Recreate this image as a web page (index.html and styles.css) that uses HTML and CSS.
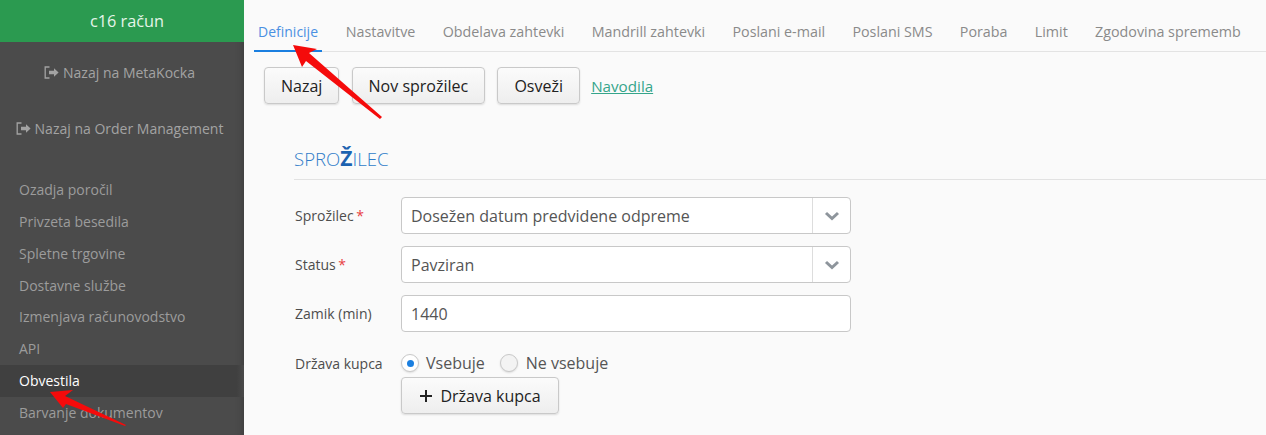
FILE: index.html
```html
<!DOCTYPE html>
<html lang="sl">
<head>
<meta charset="utf-8">
<title>Obvestila</title>
<link rel="stylesheet" href="styles.css">
</head>
<body>
<div class="app">
  <aside class="sidebar">
    <div class="brand">c16 račun</div>
    <a class="back back-first"><svg class="exit" viewBox="0 0 15 13"><path d="M5.5 1H1.2v11h4.3" fill="none" stroke="currentColor" stroke-width="1.3"/><path d="M5 4.7h5V2.2L14.6 6.5 10 10.8V8.3H5z" fill="currentColor"/></svg>Nazaj na MetaKocka</a>
    <a class="back back-second"><svg class="exit" viewBox="0 0 15 13"><path d="M5.5 1H1.2v11h4.3" fill="none" stroke="currentColor" stroke-width="1.3"/><path d="M5 4.7h5V2.2L14.6 6.5 10 10.8V8.3H5z" fill="currentColor"/></svg>Nazaj na Order Management</a>
    <nav class="menu">
      <a class="menu-item">Ozadja poročil</a>
      <a class="menu-item">Privzeta besedila</a>
      <a class="menu-item">Spletne trgovine</a>
      <a class="menu-item">Dostavne službe</a>
      <a class="menu-item">Izmenjava računovodstvo</a>
      <a class="menu-item">API</a>
      <a class="menu-item active">Obvestila</a>
      <a class="menu-item">Barvanje dokumentov</a>
    </nav>
  </aside>
  <main class="content">
    <div class="tabs">
      <a class="tab active">Definicije</a>
      <a class="tab">Nastavitve</a>
      <a class="tab">Obdelava zahtevki</a>
      <a class="tab">Mandrill zahtevki</a>
      <a class="tab">Poslani e-mail</a>
      <a class="tab">Poslani SMS</a>
      <a class="tab">Poraba</a>
      <a class="tab">Limit</a>
      <a class="tab">Zgodovina sprememb</a>
    </div>
    <div class="toolbar">
      <button class="btn">Nazaj</button>
      <button class="btn">Nov sprožilec</button>
      <button class="btn">Osveži</button>
      <a class="help">Navodila</a>
    </div>
    <section class="panel">
      <h2 class="heading">SPRO<b>Ž</b>ILEC</h2>
      <div class="row">
        <label class="label">Sprožilec <i>*</i></label>
        <div class="select"><span class="value">Dosežen datum predvidene odpreme</span><span class="caret"><svg viewBox="0 0 16 10"><path d="M2 2l6 5.5L14 2" fill="none" stroke="currentColor" stroke-width="3"/></svg></span></div>
      </div>
      <div class="row">
        <label class="label">Status <i>*</i></label>
        <div class="select"><span class="value">Pavziran</span><span class="caret"><svg viewBox="0 0 16 10"><path d="M2 2l6 5.5L14 2" fill="none" stroke="currentColor" stroke-width="3"/></svg></span></div>
      </div>
      <div class="row">
        <label class="label">Zamik (min)</label>
        <div class="select"><span class="value">1440</span></div>
      </div>
      <div class="row row-radio">
        <label class="label">Država kupca</label>
        <div class="radios">
          <span class="radio on"></span><span class="radio-text">Vsebuje</span>
          <span class="radio"></span><span class="radio-text">Ne vsebuje</span>
        </div>
      </div>
      <div class="row row-add">
        <button class="btn btn-add"><svg class="plus" viewBox="0 0 12 12"><path d="M6 0v12M0 6h12" stroke="currentColor" stroke-width="2"/></svg>Država kupca</button>
      </div>
    </section>
  </main>
</div>
<svg class="arrows" viewBox="0 0 1266 435">
  <path d="M293 45L317 49 309 53 382 117 380 119 306 61 302 67z" fill="#f50b0b"/>
  <path d="M50 392L73 390 65 396 126 425 125 426 66 404 63 408z" fill="#f50b0b"/>
</svg>
</body>
</html>
```
FILE: styles.css
```css
* { box-sizing: border-box; }
html, body { margin: 0; height: 435px; overflow: hidden; }
body { font-family: "Open Sans", "Noto Sans", sans-serif; background: #fafafa; position: relative; }
.app { display: flex; height: 435px; }
.sidebar { width: 244px; flex: none; background: #4b4b4b; display: flex; flex-direction: column; box-shadow: inset -8px 0 8px -8px rgba(0,0,0,.25); }
.brand { height: 42px; background: #2b9a50; color: #e6f5ea; font-size: 16.3px; line-height: 43px; text-align: center; padding-left: 10px; }
.back { display: flex; justify-content: center; align-items: center; color: #a3a3a3; font-size: 14px; height: 20px; padding-right: 5px; }
.back-first { margin-top: 20px; }
.back-second { margin-top: 36px; }
.exit { width: 15px; height: 13px; margin-right: 4px; }
.menu { margin-top: 36.3px; display: flex; flex-direction: column; }
.menu-item { height: 31.75px; line-height: 31.75px; padding-left: 19px; color: #9c9c9c; font-size: 14px; }
.menu-item.active { background: linear-gradient(to right, #404040 97%, #4a4a4a); color: #fff; }
.content { flex: 1; min-width: 0; padding: 0 0 0 10px; }
.tabs { display: flex; gap: 27.25px; height: 52px; padding-top: 22px; border-bottom: 1px solid #e3e3e3; }
.tab { color: #8a8a8a; font-size: 14.3px; line-height: 20px; height: 30px; white-space: nowrap; }
.tab.active { color: #4a90e2; font-size: 14px; border-bottom: 2px solid #1a7fe0; padding: 0 4px; margin-right: -3.5px; }
.toolbar { display: flex; align-items: center; gap: 12.2px; margin: 15px 0 0 10px; }
.btn { height: 37px; padding: 0 16px; background: linear-gradient(#fbfbfb, #eeeeee); border: 1px solid #c9c9c9; border-radius: 4px; color: #222; font: 16px "Open Sans", "Noto Sans", sans-serif; box-shadow: 0 1px 2px rgba(0,0,0,.12); }
.help { color: #35a58a; text-decoration: underline; font-size: 15.2px; margin-left: -1px; }
.panel { margin: 40px 0 0 40px; }
.heading { margin: 0 0 17px; height: 36px; border-bottom: 1px solid #e2e2e2; font-size: 18.6px; line-height: 28px; font-weight: 300; color: #2f7cc9; }
.heading b { color: #1c62b0; font-size: 21px; font-weight: 700; }
.row { display: flex; align-items: center; margin-bottom: 12px; }
.label { width: 107px; flex: none; font-size: 14px; color: #4d4d4d; padding-left: 1px; }
.label i { color: #e8403f; font-style: normal; margin-left: -1px; }
.select { width: 450px; height: 37px; background: #fff; border: 1px solid #c8c8c8; border-radius: 4px; display: flex; align-items: center; justify-content: space-between; font-size: 16px; color: #555; }
.value { padding-left: 9px; }
.caret { width: 38px; height: 35px; border-left: 1px solid #ddd; display: flex; align-items: center; justify-content: center; color: #8e959c; }
.caret svg { width: 16px; height: 10px; }
.row-radio { margin-bottom: 0; height: 28px; margin-top: 17px; }
.radios { display: flex; align-items: center; font-size: 16px; color: #555; }
.radio { width: 18px; height: 18px; border-radius: 50%; border: 1px solid #c9c9c9; background: #f3f3f3; box-shadow: 0 1px 2px rgba(0,0,0,.12); margin-right: 7px; display: flex; align-items: center; justify-content: center; }
.radio.on { background: #fff; }
.radio.on::after { content: ""; width: 7px; height: 7px; border-radius: 50%; background: #1a7fe0; }
.radio-text { margin-right: 15px; }
.radio-text:last-child { margin-left: 1px; }
.row-add { margin-left: 107px; margin-top: 0; }
.btn-add { width: 158px; display: flex; align-items: center; justify-content: center; }
.plus { width: 12px; height: 12px; margin-right: 8px; margin-left: 1px; }
.arrows { position: absolute; left: 0; top: 0; width: 1266px; height: 435px; pointer-events: none; }
```
